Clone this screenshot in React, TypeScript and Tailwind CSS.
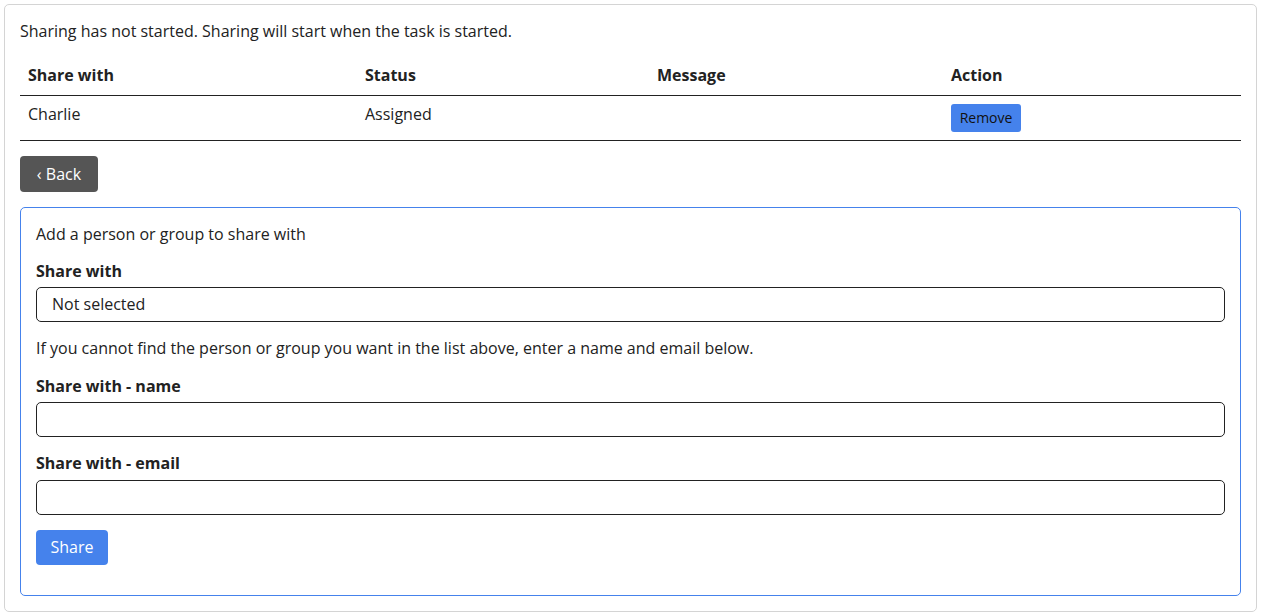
import React from "react";

const font = { fontFamily: '"Open Sans", "Noto Sans", sans-serif' };

export default function App() {
  return (
    <div className="pl-1 pr-[5px] pt-1 bg-white" style={font}>
      <div className="border border-[#d4d4d4] rounded-[5px] px-[15px] pt-[15px] pb-[15px] text-[16px] leading-[22.5px] text-[#222]">
        <p className="mb-[14px]">Sharing has not started. Sharing will start when the task is started.</p>
        <table className="w-full border-collapse text-left">
          <thead>
            <tr className="border-b border-[#222]">
              <th className="w-[337px] px-2 pt-[7px] pb-[9px] font-bold">Share with</th>
              <th className="w-[292px] px-2 pt-[7px] pb-[9px] font-bold">Status</th>
              <th className="w-[294px] px-2 pt-[7px] pb-[9px] font-bold">Message</th>
              <th className="px-2 pt-[7px] pb-[9px] font-bold">Action</th>
            </tr>
          </thead>
          <tbody>
            <tr className="border-b border-[#222]">
              <td className="px-2 pt-[7px] pb-[9px] align-top">Charlie</td>
              <td className="px-2 pt-[7px] pb-[9px] align-top">Assigned</td>
              <td className="px-2 pt-[7px] pb-[9px] align-top"></td>
              <td className="px-2 pt-[8px] pb-[8px] align-top">
                <button className="block h-[28px] w-[70px] rounded-[3px] bg-[#4582ec] text-[14px] leading-[28px] text-[#111]">Remove</button>
              </td>
            </tr>
          </tbody>
        </table>
        <button className="block mt-[15px] h-[36px] w-[78px] rounded-[4px] bg-[#555] text-white">‹ Back</button>
        <div className="mt-[15px] border border-[#4582ec] rounded-[5px] px-[15px] pt-[15px] pb-[30px]">
          <p className="mb-[14px]">Add a person or group to share with</p>
          <label className="block font-bold mb-[5px]">Share with</label>
          <div className="h-[35px] border border-[#222] rounded-[5px] px-[15px] flex items-center mb-[15px]">Not selected</div>
          <p className="mb-[15px]">If you cannot find the person or group you want in the list above, enter a name and email below.</p>
          <label className="block font-bold mb-[5px]">Share with - name</label>
          <input className="block w-full h-[35px] border border-[#222] rounded-[5px] px-[15px] mb-[15px]" />
          <label className="block font-bold mb-[5px]">Share with - email</label>
          <input className="block w-full h-[35px] border border-[#222] rounded-[5px] px-[15px] mb-[15px]" />
          <button className="block h-[35px] w-[72px] rounded-[4px] bg-[#4582ec] text-white">Share</button>
        </div>
      </div>
    </div>
  );
}
